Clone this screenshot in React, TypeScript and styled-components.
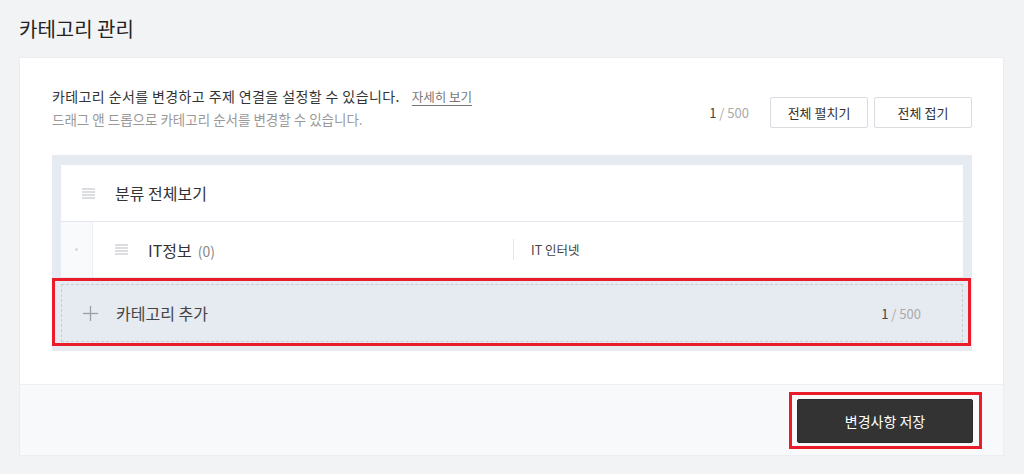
import styled, { createGlobalStyle } from "styled-components"

const GlobalStyle = createGlobalStyle`
    html, body {
        margin: 0;
        padding: 0;
        background: #f2f3f5;
        font-family: "Noto Sans CJK KR", "Noto Sans", sans-serif;
        color: #333;
    }
    * { box-sizing: border-box; }
`

const Page = styled.div`
    width: 1024px;
    height: 474px;
    padding: 14px 20px 0 19px;
    overflow: hidden;
`

const Title = styled.h1`
    margin: 0 0 13px;
    font-size: 20px;
    font-weight: 400;
    line-height: 30px;
    color: #222;
`

const Card = styled.section`
    background: #fff;
    border: 1px solid #ebedf0;
`

const Body = styled.div`
    padding: 27px 31px 33px 32px;
`

const Header = styled.div`
    display: flex;
    align-items: flex-end;
    justify-content: space-between;
    margin-bottom: 24px;
`

const Info = styled.div`
    display: flex;
    flex-direction: column;

    .desc {
        font-size: 14px;
        line-height: 23px;
        letter-spacing: 0.4px;
        color: #333;
    }

    .more {
        margin-left: 12px;
        font-size: 12.5px;
        letter-spacing: 0;
        color: #777;
        text-decoration: underline;
        text-underline-offset: 3px;
    }

    .hint {
        font-size: 13.5px;
        line-height: 23px;
        color: #999;
    }
`

const Actions = styled.div`
    display: flex;
    align-items: center;
    gap: 6px;
    margin-bottom: 3px;
`

const Count = styled.span`
    font-size: 13px;
    color: #aaa;
    margin-right: 15px;

    b {
        font-weight: 400;
        color: #444;
    }
`

const OutlineButton = styled.button`
    width: 98px;
    height: 31px;
    background: #fff;
    border: 1px solid #d9dce1;
    border-radius: 2px;
    font-family: inherit;
    font-size: 13px;
    color: #333;
    padding: 0;
`

const Tree = styled.div`
    background: #e6eaf1;
    padding: 10px 9px 9px;
`

const List = styled.ul`
    list-style: none;
    margin: 0;
    padding: 0;
    background: #fff;
`

const Row = styled.li<{ $child?: boolean }>`
    display: flex;
    align-items: center;
    height: 56px;
    border-top: ${p => (p.$child ? "1px solid #e3e6ec" : "none")};
    font-size: 16px;
    color: #333;
`

const Indent = styled.div`
    width: 32px;
    align-self: stretch;
    display: flex;
    align-items: center;
    justify-content: center;
    background: #f9fafb;
    border-right: 1px solid #eceef2;

    &::after {
        content: "";
        width: 3px;
        height: 3px;
        border-radius: 50%;
        background: #d6d9de;
        margin-left: -1px;
    }
`

const Handle = styled.span<{ $left: number }>`
    display: inline-flex;
    margin-left: ${p => p.$left}px;
    margin-right: 20px;
`

const Name = styled.span`
    flex: 0 0 auto;

    small {
        margin-left: 6px;
        font-size: 14px;
        color: #888;
    }
`

const Topic = styled.div`
    margin-left: auto;
    width: 450px;
    height: 21px;
    display: flex;
    align-items: center;
    padding-left: 17px;
    border-left: 1px solid #e3e6ec;
    font-size: 12.5px;
    color: #444;
`

const AddWrap = styled.div`
    position: relative;
    margin-top: 7px;
`

const AddRow = styled.div`
    display: flex;
    align-items: center;
    height: 58px;
    padding: 0 41px 0 21px;
    border: 1px dashed #c9cdd4;
    font-size: 16px;
    color: #444;

    .label {
        margin-left: 18px;
        flex: 1;
    }

    ${Count} {
        margin-right: 0;
    }
`

const Highlight = styled.span<{ $t: number; $r: number; $b: number; $l: number }>`
    position: absolute;
    top: ${p => -p.$t}px;
    right: ${p => -p.$r}px;
    bottom: ${p => -p.$b}px;
    left: ${p => -p.$l}px;
    border: 3px solid #ea1c2a;
    pointer-events: none;
`

const Footer = styled.footer`
    display: flex;
    justify-content: flex-end;
    padding: 14px 30px 12px;
    background: #f8f9fb;
    border-top: 1px solid #eef0f3;
`

const SaveWrap = styled.div`
    position: relative;
`

const SaveButton = styled.button`
    width: 176px;
    height: 44px;
    background: #333;
    border: 1px solid #2a2a2a;
    border-radius: 2px;
    color: #fff;
    font-family: inherit;
    font-size: 14px;
    padding: 0;
`

const HandleIcon = () => (
    <svg width="13" height="11" viewBox="0 0 13 11">
        {[1, 4, 7, 10].map(y => (
            <line key={y} x1="0" x2="13" y1={y} y2={y} stroke="#c4c7cc" strokeWidth="1.2" />
        ))}
    </svg>
)

const PlusIcon = () => (
    <svg width="15" height="15" viewBox="0 0 15 15">
        <line x1="7.5" y1="0" x2="7.5" y2="15" stroke="#9a9ea5" strokeWidth="1.3" />
        <line x1="0" y1="7.5" x2="15" y2="7.5" stroke="#9a9ea5" strokeWidth="1.3" />
    </svg>
)

export default function App() {
    return (
        <>
            <GlobalStyle />
            <Page>
                <Title>카테고리 관리</Title>
                <Card>
                    <Body>
                        <Header>
                            <Info>
                                <span className="desc">
                                    카테고리 순서를 변경하고 주제 연결을 설정할 수 있습니다.
                                    <a className="more">자세히 보기</a>
                                </span>
                                <span className="hint">드래그 앤 드롭으로 카테고리 순서를 변경할 수 있습니다.</span>
                            </Info>
                            <Actions>
                                <Count><b>1</b> / 500</Count>
                                <OutlineButton>전체 펼치기</OutlineButton>
                                <OutlineButton>전체 접기</OutlineButton>
                            </Actions>
                        </Header>
                        <Tree>
                            <List>
                                <Row>
                                    <Handle $left={21}><HandleIcon /></Handle>
                                    <Name>분류 전체보기</Name>
                                </Row>
                                <Row $child>
                                    <Indent />
                                    <Handle $left={22}><HandleIcon /></Handle>
                                    <Name>IT정보<small>(0)</small></Name>
                                    <Topic>IT 인터넷</Topic>
                                </Row>
                            </List>
                            <AddWrap>
                                <AddRow>
                                    <PlusIcon />
                                    <span className="label">카테고리 추가</span>
                                    <Count><b>1</b> / 500</Count>
                                </AddRow>
                                <Highlight $t={6} $r={8} $b={4} $l={9} />
                            </AddWrap>
                        </Tree>
                    </Body>
                    <Footer>
                        <SaveWrap>
                            <SaveButton>변경사항 저장</SaveButton>
                            <Highlight $t={7} $r={9} $b={6} $l={8} />
                        </SaveWrap>
                    </Footer>
                </Card>
            </Page>
        </>
    )
}
